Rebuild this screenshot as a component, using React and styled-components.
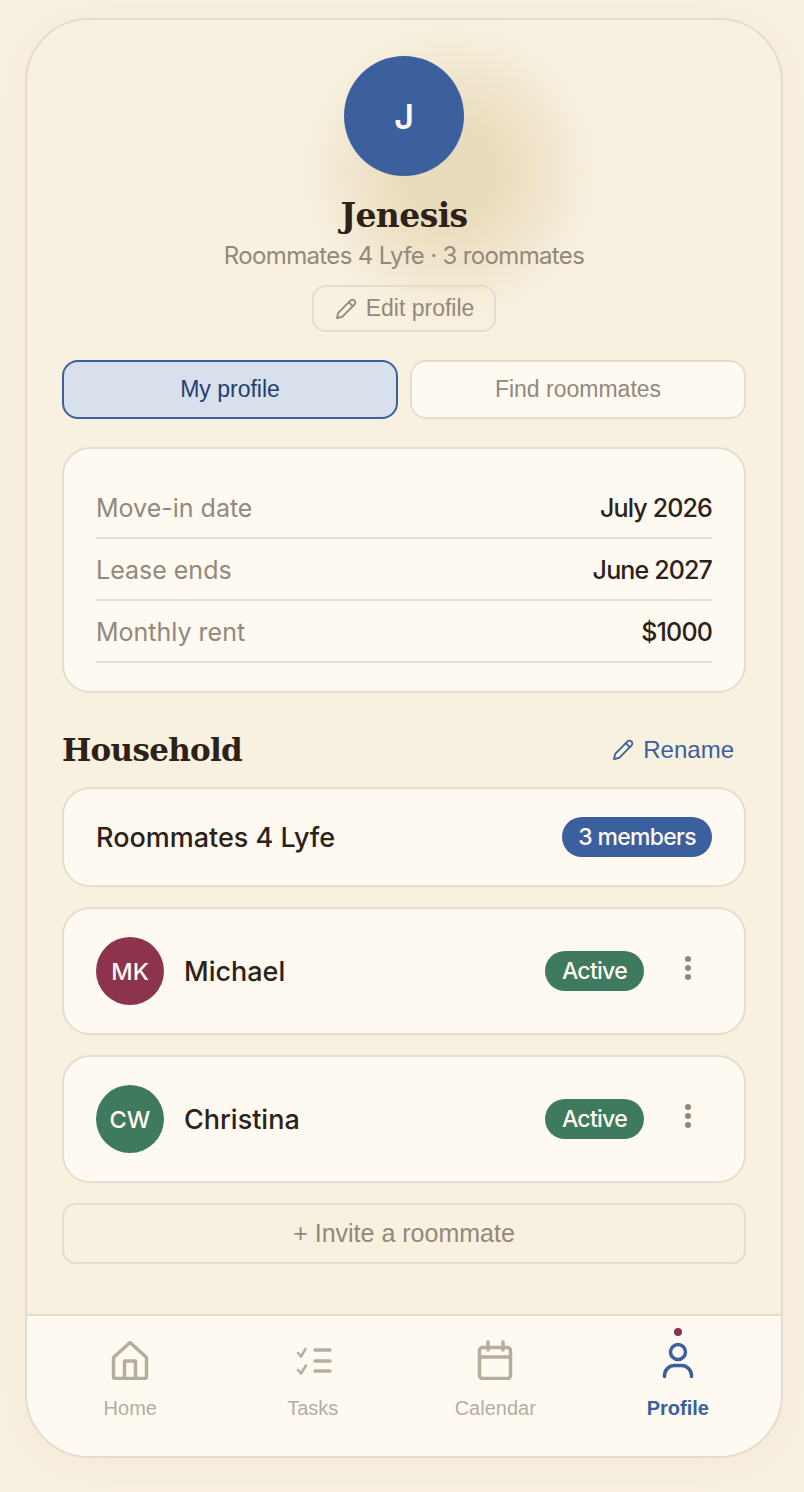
import React from "react";
import styled, { createGlobalStyle } from "styled-components";

const body = `"Inter", "Liberation Sans", sans-serif`;
const system = `"Liberation Sans", Arial, sans-serif`;
const serif = `"DejaVu Serif", "Liberation Serif", serif`;

const Global = createGlobalStyle`
  html, body { margin: 0; padding: 0; background: #f8f1e0; }
  * { box-sizing: border-box; }
`;

const Page = styled.div`
  width: 804px;
  height: 1492px;
  padding: 18px 0 0 25px;
  background: #f8f1e0;
`;

const Phone = styled.div`
  position: relative;
  width: 758px;
  height: 1440px;
  border: 2px solid #e4ddcf;
  border-radius: 64px;
  background: #f8f1e0;
  box-shadow: 0 6px 40px 10px #f6ebda;
  overflow: hidden;
  display: flex;
  flex-direction: column;
`;

const Glow = styled.div`
  position: absolute;
  left: 263px;
  top: -8px;
  width: 320px;
  height: 320px;
  border-radius: 50%;
  background: radial-gradient(circle, #e9dbba 0%, #e9dcbc 20%, #eee2c7 35%, #f3ead4 50%, #f7efde 62%, #f8f1e0 70%);
`;

const Content = styled.div`
  position: relative;
  flex: 1;
  padding: 36px 35px 0;
  display: flex;
  flex-direction: column;
`;

const Hero = styled.div`
  display: flex;
  flex-direction: column;
  align-items: center;
`;

const HeroAvatar = styled.div`
  width: 120px;
  height: 120px;
  border-radius: 50%;
  background: #3c5f9e;
  color: #fffaf0;
  font: 600 34px ${body};
  display: flex;
  align-items: center;
  justify-content: center;
`;

const Name = styled.h1`
  margin: 17px 0 0;
  font: 700 33px/46px ${serif};
  letter-spacing: -0.6px;
  color: #2d2118;
`;

const Subtitle = styled.div`
  margin-top: 1px;
  font: 400 24px/32px ${body};
  letter-spacing: -0.65px;
  color: #93887a;
`;

const EditButton = styled.button`
  margin-top: 13px;
  width: 184px;
  height: 47px;
  border: 2px solid #e4ddcf;
  border-radius: 14px;
  background: transparent;
  color: #93887a;
  font: 400 23px ${system};
  display: flex;
  align-items: center;
  justify-content: center;
  gap: 8px;
  padding: 0;
`;

const Tabs = styled.div`
  margin-top: 28px;
  display: grid;
  grid-template-columns: 1fr 1fr;
  gap: 12px;
`;

const Tab = styled.button`
  height: 59px;
  border-radius: 16px;
  border: 2px solid ${(p) => (p.$active ? "#3c5f9e" : "#e4ddcf")};
  background: ${(p) => (p.$active ? "#d8e0ec" : "#fefaf2")};
  color: ${(p) => (p.$active ? "#233f72" : "#93887a")};
  font: 400 23px ${system};
  padding: 0;
`;

const Card = styled.div`
  background: #fefaf2;
  border: 2px solid #e4ddcf;
  border-radius: 28px;
`;

const InfoCard = styled(Card)`
  margin-top: 28px;
  height: 246px;
  padding: 28px 32px 0;
`;

const InfoRow = styled.div`
  height: 62px;
  border-bottom: 2px solid #e4ddcf;
  display: flex;
  align-items: center;
  justify-content: space-between;
  padding-top: 2px;
`;

const InfoLabel = styled.span`
  font: 400 25px ${body};
  color: #93887a;
`;

const InfoValue = styled.span`
  font: 500 25px ${body};
  letter-spacing: -0.85px;
  color: #2d2118;
`;

const SectionHead = styled.div`
  margin-top: 35px;
  height: 44px;
  display: flex;
  align-items: center;
  justify-content: space-between;
  padding-right: 12px;
`;

const SectionTitle = styled.h2`
  margin: 0;
  font: 700 31px ${serif};
  letter-spacing: -0.7px;
  color: #2d2118;
`;

const Rename = styled.button`
  border: 0;
  background: none;
  padding: 0;
  color: #3c5f9e;
  font: 400 24px ${system};
  display: flex;
  align-items: center;
  gap: 8px;
`;

const HouseCard = styled(Card)`
  margin-top: 15px;
  height: 100px;
  padding: 0 32px;
  display: flex;
  align-items: center;
  justify-content: space-between;
`;

const HouseName = styled.span`
  font: 500 27px ${body};
  color: #2d2118;
`;

const Pill = styled.span`
  height: 40px;
  padding: 0 ${(p) => p.$pad}px;
  border-radius: 20px;
  background: ${(p) => p.$color};
  color: #fffaf0;
  font: 500 23px/40px ${body};
  letter-spacing: -0.7px;
`;

const MemberCard = styled(Card)`
  margin-top: 20px;
  height: 128px;
  padding: 0 32px;
  display: flex;
  align-items: center;
`;

const MemberAvatar = styled.div`
  width: 68px;
  height: 68px;
  border-radius: 50%;
  background: ${(p) => p.$color};
  color: #fffaf0;
  font: 500 23.5px ${body};
  display: flex;
  align-items: center;
  justify-content: center;
`;

const MemberName = styled.span`
  margin-left: 20px;
  flex: 1;
  font: 500 27px ${body};
  color: #2d2118;
`;

const Dots = styled.div`
  width: 48px;
  margin-left: 20px;
  margin-top: -6px;
  display: flex;
  flex-direction: column;
  align-items: center;
  gap: 3px;
`;

const Dot = styled.i`
  width: 6px;
  height: 6px;
  border-radius: 50%;
  background: #93887a;
`;

const InviteButton = styled.button`
  margin-top: 20px;
  height: 61px;
  border: 2px solid #e4ddcf;
  border-radius: 14px;
  background: transparent;
  color: #93887a;
  font: 400 25px ${system};
  padding: 0;
`;

const Nav = styled.nav`
  position: relative;
  height: 142px;
  border-top: 2px solid #e4ddcf;
  background: #fefaf2;
  padding: 0 12px;
  display: grid;
  grid-template-columns: repeat(4, 1fr);
`;

const NavItem = styled.div`
  position: relative;
  padding-top: 24px;
  display: flex;
  flex-direction: column;
  align-items: center;
  color: ${(p) => (p.$active ? "#3c5f9e" : "#b5ad9e")};
  font: ${(p) => (p.$active ? 700 : 400)} 20px/24px ${system};
`;

const NavIcon = styled.svg`
  width: 40px;
  height: 40px;
  fill: none;
  stroke: currentColor;
  stroke-width: 3.5;
  stroke-linecap: round;
  stroke-linejoin: round;
  margin-bottom: 16px;
`;

const NavDot = styled.span`
  position: absolute;
  top: 12px;
  left: 50%;
  margin-left: -4px;
  width: 8px;
  height: 8px;
  border-radius: 50%;
  background: #8c334e;
`;

const Pencil = ({ size = 24 }) => (
  <svg width={size} height={size} viewBox="0 0 24 24" fill="none" stroke="currentColor" strokeWidth="1.8" strokeLinecap="round" strokeLinejoin="round">
    <path d="M3 21l1.2-5.2L16.6 3.4a2.6 2.6 0 0 1 3.7 0l.3.3a2.6 2.6 0 0 1 0 3.7L8.2 19.8 3 21z" />
    <path d="M14.8 5.2l4 4" />
  </svg>
);

const MemberRow = ({ initials, name, color }) => (
  <MemberCard>
    <MemberAvatar $color={color}>{initials}</MemberAvatar>
    <MemberName>{name}</MemberName>
    <Pill $color="#3f7a5e" $pad={17}>Active</Pill>
    <Dots>
      <Dot />
      <Dot />
      <Dot />
    </Dots>
  </MemberCard>
);

const App = () => (
  <Page>
    <Global />
    <Phone>
      <Glow />
      <Content>
        <Hero>
          <HeroAvatar>J</HeroAvatar>
          <Name>Jenesis</Name>
          <Subtitle>Roommates 4 Lyfe · 3 roommates</Subtitle>
          <EditButton>
            <Pencil />
            Edit profile
          </EditButton>
        </Hero>

        <Tabs>
          <Tab $active>My profile</Tab>
          <Tab>Find roommates</Tab>
        </Tabs>

        <InfoCard>
          <InfoRow>
            <InfoLabel>Move-in date</InfoLabel>
            <InfoValue>July 2026</InfoValue>
          </InfoRow>
          <InfoRow>
            <InfoLabel>Lease ends</InfoLabel>
            <InfoValue>June 2027</InfoValue>
          </InfoRow>
          <InfoRow>
            <InfoLabel>Monthly rent</InfoLabel>
            <InfoValue>$1000</InfoValue>
          </InfoRow>
        </InfoCard>

        <SectionHead>
          <SectionTitle>Household</SectionTitle>
          <Rename>
            <Pencil />
            Rename
          </Rename>
        </SectionHead>

        <HouseCard>
          <HouseName>Roommates 4 Lyfe</HouseName>
          <Pill $color="#3c5f9e" $pad={16}>3 members</Pill>
        </HouseCard>

        <MemberRow initials="MK" name="Michael" color="#8c334e" />
        <MemberRow initials="CW" name="Christina" color="#3f7a5e" />

        <InviteButton>+ Invite a roommate</InviteButton>
      </Content>

      <Nav>
        <NavItem>
          <NavIcon viewBox="0 0 40 40">
            <path d="M20 2.5L35.500 16.500a2 2 0 0 1 1 1.700V36.500a2 2 0 0 1-2 2H5.500a2 2 0 0 1-2-2V18.200a2 2 0 0 1 1-1.700L20 2.500z" />
            <path d="M14.500 38.500V21h11v17.500" />
          </NavIcon>
          Home
        </NavItem>
        <NavItem>
          <NavIcon viewBox="0 0 40 40">
            <path strokeWidth="2.500" d="M5 13l3 3.500 4.500-7.500" />
            <path strokeWidth="2.500" d="M5 30l3 3.500 5-8" />
            <path d="M22 10h15M22 21h15M22 31h15" />
          </NavIcon>
          Tasks
        </NavItem>
        <NavItem>
          <NavIcon viewBox="0 0 40 40">
            <rect x="4.500" y="7.500" width="31" height="31" rx="3" />
            <path d="M4.500 17h31M13 2v8M28 2v8" />
          </NavIcon>
          Calendar
        </NavItem>
        <NavItem $active>
          <NavDot />
          <NavIcon viewBox="0 0 40 40">
            <circle cx="20" cy="12" r="7.500" />
            <path d="M6.500 36.500v-1a10 10 0 0 1 10-10h7a10 10 0 0 1 10 10v1" />
          </NavIcon>
          Profile
        </NavItem>
      </Nav>
    </Phone>
  </Page>
);

export default App;
